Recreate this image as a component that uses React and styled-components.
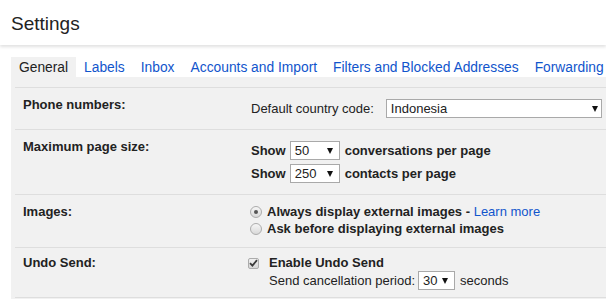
import styled, { createGlobalStyle } from "styled-components";

const GlobalStyle = createGlobalStyle`
  html, body {
    margin: 0;
    padding: 0;
    background: #fff;
    overflow: hidden;
  }
  body {
    font-family: "Liberation Sans", Arial, sans-serif;
    font-size: 13px;
    color: #222;
  }
`;

const Header = styled.div`
  position: relative;
  height: 45px;
  box-sizing: border-box;
  padding: 13px 0 0 11px;
  box-shadow: 0 2px 3px rgba(0, 0, 0, 0.12);
`;

const Title = styled.h1`
  margin: 0;
  font-size: 19px;
  font-weight: normal;
  line-height: 22px;
  color: #222;
`;

const Tabs = styled.div`
  display: flex;
  margin: 12px 0 0 11px;
  white-space: nowrap;
  overflow: hidden;
`;

const Tab = styled.div`
  flex-shrink: 0;
  height: 20px;
  box-sizing: border-box;
  padding: 1px 8px 0;
  line-height: 19px;
  font-size: 13.8px;
  color: ${(p) => (p.$active ? "#222" : "#15c")};
  background: ${(p) => (p.$active ? "#f1f1f1" : "transparent")};
`;

const Panel = styled.div`
  margin-left: 11px;
  padding: 10px 0 2px 4px;
  background: #f1f1f1;
`;

const Row = styled.div`
  display: flex;
  border-top: 1px solid #dedede;
  border-bottom: ${(p) => (p.$last ? "1px solid #dedede" : "none")};
`;

const Label = styled.div`
  flex-shrink: 0;
  width: 236px;
  box-sizing: border-box;
  padding: ${(p) => p.$top}px 0 0 8px;
  font-weight: bold;
  line-height: 16px;
`;

const Value = styled.div`
  flex: 1;
  display: flex;
  flex-direction: column;
  gap: ${(p) => p.$gap || 0}px;
  padding: ${(p) => p.$pt}px 0 ${(p) => p.$pb}px;
`;

const Line = styled.div`
  display: flex;
  align-items: center;
  height: ${(p) => p.$h || 16}px;
  line-height: 16px;
  white-space: nowrap;
  font-weight: ${(p) => (p.$bold ? "bold" : "normal")};
  margin-left: ${(p) => p.$indent || 0}px;
`;

const Select = styled.div`
  flex-shrink: 0;
  display: flex;
  align-items: center;
  justify-content: space-between;
  width: ${(p) => p.$w}px;
  height: 19px;
  box-sizing: border-box;
  margin: 0 5px 0 ${(p) => p.$ml}px;
  padding: 0 ${(p) => p.$ar}px 0 4px;
  border: 1px solid #a9a9a9;
  background: #fff;
  font-weight: normal;
  color: #222;
`;

const Arrow = styled.span`
  width: 0;
  height: 0;
  border-left: 3.5px solid transparent;
  border-right: 3.5px solid transparent;
  border-top: 6px solid #111;
`;

const Radio = styled.span`
  flex-shrink: 0;
  display: flex;
  align-items: center;
  justify-content: center;
  width: 12px;
  height: 12px;
  box-sizing: border-box;
  margin: 0 5px 0 -1px;
  border: 1px solid #acacac;
  border-radius: 50%;
  background: linear-gradient(#f6f6f6, #d9d9d9);

  &::after {
    content: "";
    display: ${(p) => (p.$checked ? "block" : "none")};
    width: 4px;
    height: 4px;
    border-radius: 50%;
    background: #555;
  }
`;

const Check = styled.span`
  flex-shrink: 0;
  display: flex;
  align-items: center;
  justify-content: center;
  width: 11px;
  height: 11px;
  box-sizing: border-box;
  margin: 0 10px 0 -3px;
  border: 1px solid #acacac;
  border-radius: 2px;
  background: linear-gradient(#f0f0f0, #d6d6d6);
`;

const Link = styled.span`
  color: #15c;
  font-weight: normal;
`;

const Dropdown = ({ value, width, ml = 4, ar = 6 }) => (
  <Select $w={width} $ml={ml} $ar={ar}>
    {value}
    <Arrow />
  </Select>
);

const App = () => {
  return (
    <>
      <GlobalStyle />
      <Header>
        <Title>Settings</Title>
      </Header>
      <Tabs>
        <Tab $active>General</Tab>
        <Tab>Labels</Tab>
        <Tab>Inbox</Tab>
        <Tab>Accounts and Import</Tab>
        <Tab>Filters and Blocked Addresses</Tab>
        <Tab>Forwarding and POP/IMAP</Tab>
      </Tabs>
      <Panel>
        <Row>
          <Label $top={9}>Phone numbers:</Label>
          <Value $pt={11} $pb={11}>
            <Line $h={19}>
              Default country code:
              <Dropdown value="Indonesia" width={216} ml={12} ar={3} />
            </Line>
          </Value>
        </Row>
        <Row>
          <Label $top={9}>Maximum page size:</Label>
          <Value $pt={11} $pb={11} $gap={4}>
            <Line $h={19} $bold>
              Show
              <Dropdown value="50" width={50} />
              conversations per page
            </Line>
            <Line $h={19} $bold>
              Show
              <Dropdown value="250" width={50} />
              contacts per page
            </Line>
          </Value>
        </Row>
        <Row>
          <Label $top={9}>Images:</Label>
          <Value $pt={8} $pb={10}>
            <Line $h={17} $bold>
              <Radio $checked />
              Always display external images&nbsp;-&nbsp;<Link>Learn more</Link>
            </Line>
            <Line $h={17} $bold>
              <Radio />
              Ask before displaying external images
            </Line>
          </Value>
        </Row>
        <Row $last>
          <Label $top={7}>Undo Send:</Label>
          <Value $pt={7} $pb={7}>
            <Line $bold>
              <Check>
                <svg width="9" height="8" viewBox="0 0 9 8">
                  <path d="M1 4.2 L3.4 6.6 L8 1.2" fill="none" stroke="#3a3a3a" strokeWidth="1.8" />
                </svg>
              </Check>
              Enable Undo Send
            </Line>
            <Line $h={19} $indent={18}>
              Send cancellation period:
              <Dropdown value="30" width={37} ml={3} />
              seconds
            </Line>
          </Value>
        </Row>
      </Panel>
    </>
  );
};

export default App;
